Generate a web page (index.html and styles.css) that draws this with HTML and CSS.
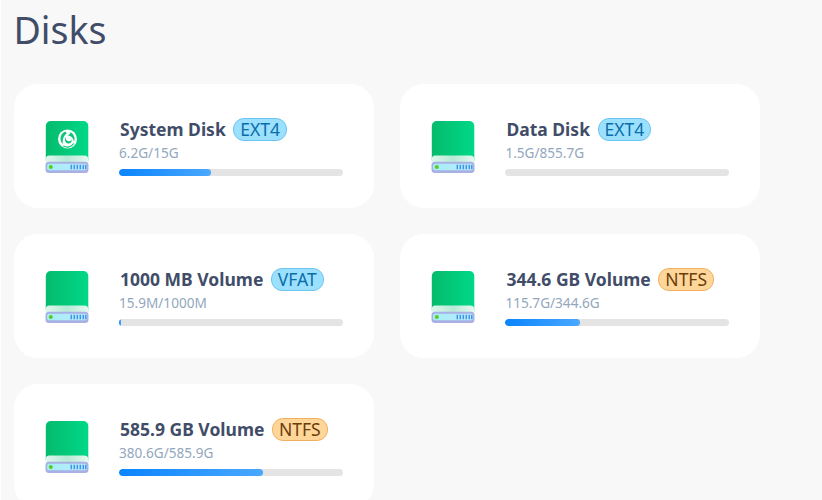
FILE: index.html
```html
<!DOCTYPE html>
<html lang="en">
<head>
<meta charset="utf-8">
<title>Disks</title>
<link rel="stylesheet" href="styles.css">
</head>
<body>
<svg class="defs" width="0" height="0" aria-hidden="true">
  <defs>
    <linearGradient id="g-body" x1="0" y1="0" x2="1" y2="0"><stop offset="0" stop-color="#05bb6c"/><stop offset="1" stop-color="#00d888"/></linearGradient>
    <linearGradient id="g-top" x1="0" y1="0" x2="1" y2="0"><stop offset="0" stop-color="#dff6ec"/><stop offset="0.5" stop-color="#b6ead6"/><stop offset="1" stop-color="#e6f8f0"/></linearGradient>
    <linearGradient id="g-slot" x1="0" y1="0" x2="1" y2="0"><stop offset="0" stop-color="#a0f0f8"/><stop offset="1" stop-color="#c4e6fb"/></linearGradient>
    <symbol id="drive" viewBox="0 0 44 53">
      <rect x="0.800" y="0" width="42.500" height="44" rx="5" fill="url(#g-body)"/>
      <path d="M0.800 38c0-2.500 1.500-3.500 3.500-3.500h35c2 0 4 1 4 3.500v6H0.800z" fill="url(#g-top)"/>
      <rect x="0.500" y="40.700" width="43" height="11.300" rx="3.500" fill="#a8b0e4"/>
      <rect x="2.100" y="42.800" width="40" height="6.400" rx="2" fill="url(#g-slot)"/>
      <circle cx="5.800" cy="46" r="2" fill="#62c91c"/>
      <path d="M26.300 43.800v4.400M29.300 43.800v4.400M32.300 43.800v4.400M35.300 43.800v4.400M38.300 43.800v4.400M40.800 43.800v4.400" stroke="#3a97ec" stroke-width="1.500"/>
    </symbol>
  </defs>
</svg>
<main class="page">
  <h1 class="title">Disks</h1>
  <div class="grid">
    <section class="card">
      <svg class="icon" aria-hidden="true">
        <use href="#drive"/>
        <circle cx="22.500" cy="18" r="9.500" fill="#fff"/>
        <path d="M20.300 10.500c-5 2-6.500 8.500-2.500 12.500-.5-4 .5-8.500 4-10.500z" fill="#0bc678"/>
        <path d="M25.300 11c3.800 2.200 5.300 6.300 3.600 9.800-.4-3.600-2.800-6.300-6.600-6.300 2.300-.8 3.300-2 3-3.500z" fill="#0bc678"/>
        <path d="M20.800 16c-.5 2.500 1 4.500 3.500 4.300 1.200-.1 2-.8 2.500-1.800.3 2.500-1.500 4.200-3.700 4-2.800-.3-4-3.700-2.300-6.500z" fill="#0bc678"/>
        <path d="M18.300 25c3.500 2 8 1 10.500-2.500" fill="none" stroke="#0bc678" stroke-width="1.200"/>
      </svg>
      <div class="info">
        <div class="head"><span class="name">System Disk</span><span class="tag tag-blue">EXT4</span></div>
        <div class="usage">6.2G/15G</div>
        <div class="bar"><div class="fill" style="width:41%"></div></div>
      </div>
    </section>
    <section class="card">
      <svg class="icon" aria-hidden="true"><use href="#drive"/></svg>
      <div class="info">
        <div class="head"><span class="name">Data Disk</span><span class="tag tag-blue">EXT4</span></div>
        <div class="usage">1.5G/855.7G</div>
        <div class="bar"><div class="fill" style="width:0%"></div></div>
      </div>
    </section>
    <section class="card">
      <svg class="icon" aria-hidden="true"><use href="#drive"/></svg>
      <div class="info">
        <div class="head"><span class="name">1000 MB Volume</span><span class="tag tag-blue">VFAT</span></div>
        <div class="usage">15.9M/1000M</div>
        <div class="bar"><div class="fill" style="width:1%"></div></div>
      </div>
    </section>
    <section class="card">
      <svg class="icon" aria-hidden="true"><use href="#drive"/></svg>
      <div class="info">
        <div class="head"><span class="name">344.6 GB Volume</span><span class="tag tag-orange">NTFS</span></div>
        <div class="usage">115.7G/344.6G</div>
        <div class="bar"><div class="fill" style="width:33.500%"></div></div>
      </div>
    </section>
    <section class="card">
      <svg class="icon" aria-hidden="true"><use href="#drive"/></svg>
      <div class="info">
        <div class="head"><span class="name">585.9 GB Volume</span><span class="tag tag-orange">NTFS</span></div>
        <div class="usage">380.6G/585.9G</div>
        <div class="bar"><div class="fill" style="width:64.500%"></div></div>
      </div>
    </section>
  </div>
</main>
</body>
</html>
```
FILE: styles.css
```css
html, body {
  margin: 0;
  height: 100%;
  overflow: hidden;
  background: #fff;
}
.defs {
  display: block;
  height: 0;
}
.page {
  margin-left: 1px;
  height: 500px;
  box-sizing: border-box;
  padding: 1px 0 0 13px;
  background: #f8f8f8;
  font-family: "Noto Sans", sans-serif;
  overflow: hidden;
}
.title {
  margin: 0 0 26px -0.500px;
  font-size: 37.500px;
  line-height: 57px;
  font-weight: 400;
  color: #414d68;
}
.grid {
  display: grid;
  grid-template-columns: 360px 360px;
  grid-auto-rows: 124px;
  gap: 26px 26.400px;
}
.card {
  display: flex;
  align-items: center;
  padding: 0 31px;
  background: #fff;
  border-radius: 24px;
}
.icon {
  flex: none;
  width: 44px;
  height: 53px;
  margin: 3px 30px 0 0;
}
.info {
  flex: 1;
  min-width: 0;
}
.head {
  display: flex;
  align-items: center;
  gap: 7.500px;
  height: 26px;
}
.name {
  font-size: 17.500px;
  font-weight: 700;
  color: #414d68;
  margin-left: 1px;
}
.tag {
  font-size: 17.500px;
  line-height: 21px;
  padding: 0 6px;
  border-radius: 11px;
  border: 1px solid;
}
.tag-blue {
  background: #9ce0ff;
  border-color: #6cc4f0;
  color: #0a6ea8;
}
.tag-orange {
  background: #ffd699;
  border-color: #f0b060;
  color: #6b3d0a;
}
.usage {
  margin-top: 1px;
  font-size: 13.600px;
  line-height: 20px;
  color: #93a7bd;
}
.bar {
  height: 7px;
  margin-top: 6px;
  border-radius: 4px;
  background: #e4e4e4;
  overflow: hidden;
}
.fill {
  height: 100%;
  border-radius: 4px;
  background: linear-gradient(90deg, #0a84ff, #4aa8ff);
}
```
